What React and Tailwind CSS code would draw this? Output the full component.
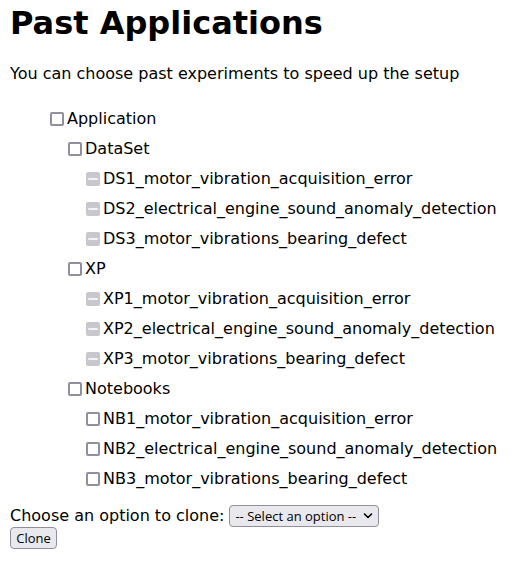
import { useState } from "react";

const tree = [
  {
    id: "application",
    label: "Application",
    children: [
      {
        id: "dataset",
        label: "DataSet",
        children: [
          { id: "ds1", label: "DS1_motor_vibration_acquisition_error", locked: true },
          { id: "ds2", label: "DS2_electrical_engine_sound_anomaly_detection", locked: true },
          { id: "ds3", label: "DS3_motor_vibrations_bearing_defect", locked: true },
        ],
      },
      {
        id: "xp",
        label: "XP",
        children: [
          { id: "xp1", label: "XP1_motor_vibration_acquisition_error", locked: true },
          { id: "xp2", label: "XP2_electrical_engine_sound_anomaly_detection", locked: true },
          { id: "xp3", label: "XP3_motor_vibrations_bearing_defect", locked: true },
        ],
      },
      {
        id: "notebooks",
        label: "Notebooks",
        children: [
          { id: "nb1", label: "NB1_motor_vibration_acquisition_error" },
          { id: "nb2", label: "NB2_electrical_engine_sound_anomaly_detection" },
          { id: "nb3", label: "NB3_motor_vibrations_bearing_defect" },
        ],
      },
    ],
  },
];

const cloneOptions = tree[0].children.flatMap((group) => group.children);

function Checkbox({ id, locked }) {
  return (
    <span className="relative flex size-3.5 shrink-0">
      <input
        id={id}
        type="checkbox"
        disabled={locked}
        ref={(el) => {
          if (el) el.indeterminate = Boolean(locked);
        }}
        className="size-3.5 appearance-none rounded-xs border-2 border-[#8f8f9d] bg-white checked:border-[#0060df] checked:bg-[#0060df] disabled:border-[#c7c7cd] disabled:bg-[#c7c7cd]"
      />
      {locked && (
        <span className="pointer-events-none absolute inset-x-0.5 top-1.5 h-0.5 rounded-full bg-[#f4f4f5]" />
      )}
    </span>
  );
}

function TreeNode({ node }) {
  return (
    <li>
      <div className="flex h-[30px] items-center gap-[3px]">
        <Checkbox id={node.id} locked={node.locked} />
        <label htmlFor={node.id} className="whitespace-nowrap">
          {node.label}
        </label>
      </div>
      {node.children && (
        <ul className="pl-[18px]">
          {node.children.map((child) => (
            <TreeNode key={child.id} node={child} />
          ))}
        </ul>
      )}
    </li>
  );
}

export default function App() {
  const [choice, setChoice] = useState("");

  return (
    <main className="bg-white px-2.5 pt-1 font-['DejaVu_Sans',sans-serif] text-base leading-5 text-black">
      <h1 className="text-[32px] leading-[38px] font-bold">Past Applications</h1>
      <p className="mt-[22px]">You can choose past experiments to speed up the setup</p>

      <ul className="mt-5 pl-10">
        {tree.map((node) => (
          <TreeNode key={node.id} node={node} />
        ))}
      </ul>

      <form className="mt-[11px]" onSubmit={(e) => e.preventDefault()}>
        <div className="flex items-center gap-[5px]">
          <label htmlFor="clone-option">Choose an option to clone:</label>
          <span className="relative flex">
            <select
              id="clone-option"
              value={choice}
              onChange={(e) => setChoice(e.target.value)}
              className="h-[22px] w-[150px] appearance-none rounded-sm border border-[#8f8f9d] bg-[#e9e9ed] pl-[5px] font-['Open_Sans',sans-serif] text-[13px] leading-5"
            >
              <option value="">-- Select an option --</option>
              {cloneOptions.map((option) => (
                <option key={option.id} value={option.id}>
                  {option.label}
                </option>
              ))}
            </select>
            <svg
              viewBox="0 0 10 6"
              className="pointer-events-none absolute top-2 right-1.5 h-1.5 w-2.5"
              fill="none"
              stroke="black"
              strokeWidth="1.6"
              strokeLinecap="round"
              strokeLinejoin="round"
            >
              <path d="M1.5 1 5 4.5 8.5 1" />
            </svg>
          </span>
        </div>
        <button
          type="submit"
          className="flex h-[22px] w-[47px] items-center justify-center rounded-sm border border-[#8f8f9d] bg-[#e9e9ed] font-['Open_Sans',sans-serif] text-[13px]"
        >
          Clone
        </button>
      </form>
    </main>
  );
}
